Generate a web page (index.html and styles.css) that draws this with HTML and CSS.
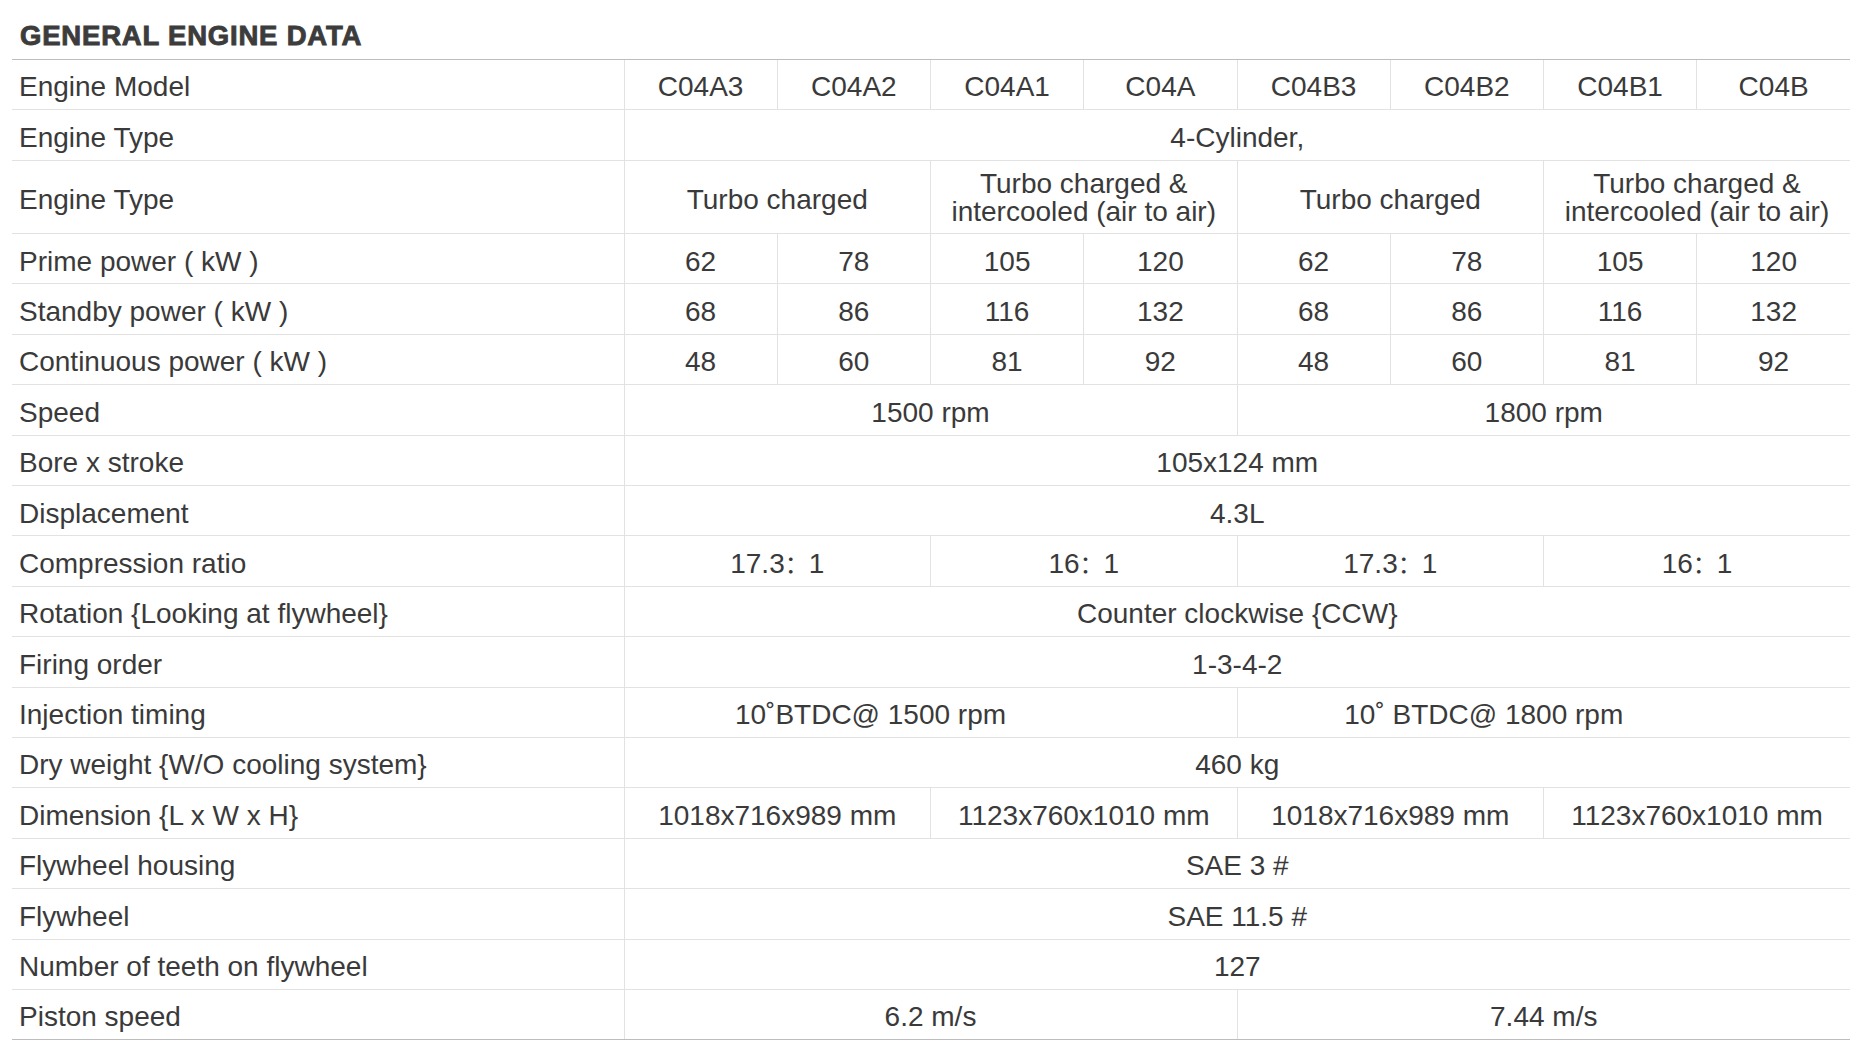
FILE: index.html
```html
<!DOCTYPE html>
<html lang="en">
<head>
<meta charset="utf-8">
<title>General Engine Data</title>
<link rel="stylesheet" href="styles.css">
</head>
<body>
<div class="page">
  <h1 class="title">GENERAL ENGINE DATA</h1>
  <table class="spec">
    <colgroup>
      <col class="c-label">
      <col class="c-val"><col class="c-val"><col class="c-val"><col class="c-val">
      <col class="c-val"><col class="c-val"><col class="c-val"><col class="c-val">
    </colgroup>
    <tbody>
      <tr><td class="lbl">Engine Model</td><td>C04A3</td><td>C04A2</td><td>C04A1</td><td>C04A</td><td>C04B3</td><td>C04B2</td><td>C04B1</td><td>C04B</td></tr>
      <tr><td class="lbl">Engine Type</td><td colspan="8">4-Cylinder,</td></tr>
      <tr class="tall"><td class="lbl">Engine Type</td><td colspan="2">Turbo charged</td><td colspan="2" class="two">Turbo charged &amp;<br>intercooled (air to air)</td><td colspan="2">Turbo charged</td><td colspan="2" class="two">Turbo charged &amp;<br>intercooled (air to air)</td></tr>
      <tr><td class="lbl">Prime power ( kW )</td><td>62</td><td>78</td><td>105</td><td>120</td><td>62</td><td>78</td><td>105</td><td>120</td></tr>
      <tr><td class="lbl">Standby power ( kW )</td><td>68</td><td>86</td><td>116</td><td>132</td><td>68</td><td>86</td><td>116</td><td>132</td></tr>
      <tr><td class="lbl">Continuous power ( kW )</td><td>48</td><td>60</td><td>81</td><td>92</td><td>48</td><td>60</td><td>81</td><td>92</td></tr>
      <tr><td class="lbl">Speed</td><td colspan="4">1500 rpm</td><td colspan="4">1800 rpm</td></tr>
      <tr><td class="lbl">Bore x stroke</td><td colspan="8">105x124 mm</td></tr>
      <tr><td class="lbl">Displacement</td><td colspan="8">4.3L</td></tr>
      <tr><td class="lbl">Compression ratio</td><td colspan="2">17.3<span class="cjk">：</span>1</td><td colspan="2">16<span class="cjk">：</span>1</td><td colspan="2">17.3<span class="cjk">：</span>1</td><td colspan="2">16<span class="cjk">：</span>1</td></tr>
      <tr><td class="lbl">Rotation {Looking at flywheel}</td><td colspan="8">Counter clockwise {CCW}</td></tr>
      <tr><td class="lbl">Firing order</td><td colspan="8">1-3-4-2</td></tr>
      <tr><td class="lbl">Injection timing</td><td colspan="4" class="shift">10˚BTDC@ 1500 rpm</td><td colspan="4" class="shift">10˚ BTDC@ 1800 rpm</td></tr>
      <tr><td class="lbl">Dry weight {W/O cooling system}</td><td colspan="8">460 kg</td></tr>
      <tr><td class="lbl">Dimension {L x W x H}</td><td colspan="2">1018x716x989 mm</td><td colspan="2">1123x760x1010 mm</td><td colspan="2">1018x716x989 mm</td><td colspan="2">1123x760x1010 mm</td></tr>
      <tr><td class="lbl">Flywheel housing</td><td colspan="8">SAE 3 #</td></tr>
      <tr><td class="lbl">Flywheel</td><td colspan="8">SAE 11.5 #</td></tr>
      <tr><td class="lbl">Number of teeth on flywheel</td><td colspan="8">127</td></tr>
      <tr><td class="lbl">Piston speed</td><td colspan="4">6.2 m/s</td><td colspan="4">7.44 m/s</td></tr>
    </tbody>
  </table>
</div>
</body>
</html>
```

FILE: styles.css
```css
html, body {
  margin: 0;
  padding: 0;
  background: #ffffff;
}

.page {
  padding: 21px 24px 0 12px;
  font-family: "Liberation Sans", Arial, sans-serif;
  color: #3a3a3a;
}

.title {
  margin: 0 0 8px 0;
  padding-left: 8px;
  font-family: "Liberation Sans", Arial, sans-serif;
  font-weight: 700;
  font-size: 27.5px;
  line-height: 30px;
  letter-spacing: 0.8px;
  color: #3c3c3c;
  -webkit-text-stroke: 0.9px #3c3c3c;
}

.spec {
  width: 1838px;
  table-layout: fixed;
  border-collapse: collapse;
  font-size: 28px;
  line-height: 28.4px;
}

.c-label {
  width: 612px;
}

.c-val {
  width: 153.25px;
}

.spec tr {
  height: 50.4px;
}

.spec tr.tall {
  height: 73.3px;
}

.spec td {
  padding: 6px 4px 0 4px;
  text-align: center;
  vertical-align: middle;
  white-space: nowrap;
  border-bottom: 1px solid #e2e2e2;
  border-left: 1px solid #e2e2e2;
}

.spec td.lbl {
  text-align: left;
  padding-left: 7px;
  border-left: none;
}

.spec td.two {
  padding-top: 3px;
}

.spec td.shift {
  padding-right: 124px;
}

.spec tr:first-child td {
  border-top: 1px solid #bdbdbd;
}

.spec tr:last-child td {
  border-bottom: 1px solid #bdbdbd;
}

.cjk {
  font-family: "Noto Sans CJK SC", sans-serif;
  font-size: 24px;
}
```
